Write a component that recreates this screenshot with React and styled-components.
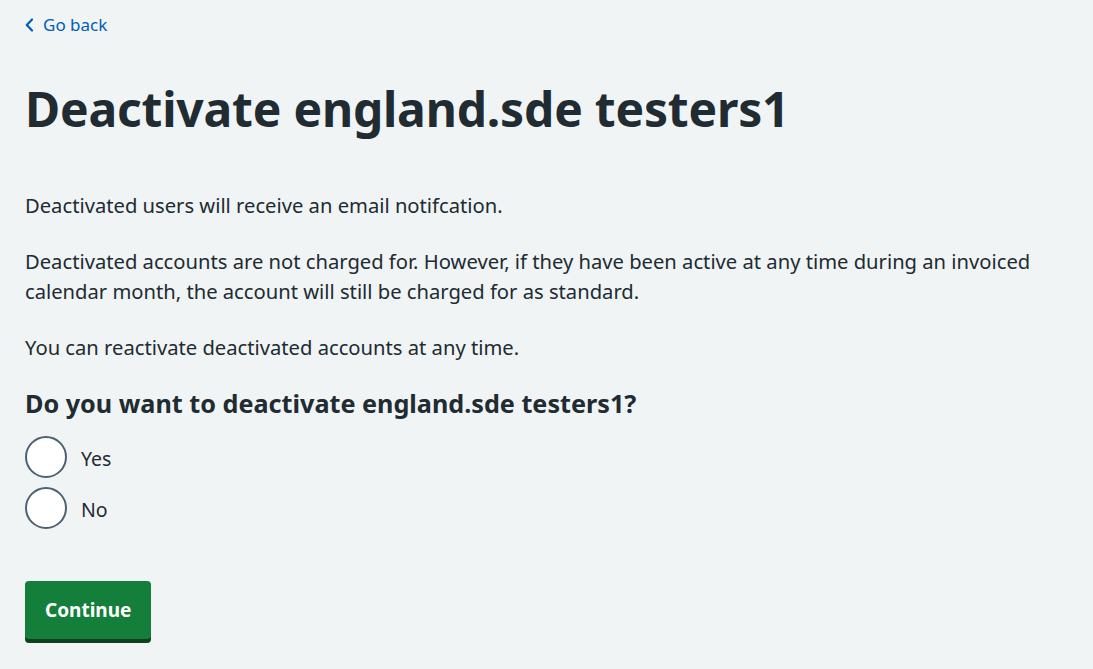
import React from 'react';
import styled, { createGlobalStyle } from 'styled-components';

const GlobalStyle = createGlobalStyle`
  html, body {
    margin: 0;
    padding: 0;
    background: #f0f4f5;
  }
  body {
    font-family: 'Noto Sans', 'Open Sans', Arial, sans-serif;
    color: #212b32;
  }
`;

const Page = styled.main`
  min-height: 669px;
  padding: 13px 25px 0;
  box-sizing: border-box;
`;

const BackLink = styled.a`
  display: flex;
  width: fit-content;
  align-items: center;
  gap: 9px;
  color: #005eb8;
  font-size: 17px;
  line-height: 24px;
  text-decoration: none;
  cursor: pointer;

  svg {
    width: 9px;
    height: 14px;
  }
`;

const Heading = styled.h1`
  margin: 44px 0 0;
  font-size: 48px;
  line-height: 56px;
  font-weight: 700;
  letter-spacing: -0.2px;
`;

const Body = styled.div`
  margin-top: 53px;
  max-width: 1043px;
`;

const Para = styled.p`
  margin: 0 0 26px;
  font-size: 20.2px;
  line-height: 30px;
`;

const Fieldset = styled.fieldset`
  border: 0;
  margin: 0;
  padding: 0;
`;

const Legend = styled.legend`
  padding: 0;
  font-size: 25.2px;
  line-height: 30px;
  font-weight: 700;
  margin-bottom: 18px;
`;

const Options = styled.div`
  display: flex;
  flex-direction: column;
  gap: 9px;
`;

const Option = styled.label`
  display: flex;
  align-items: center;
  gap: 14px;
  font-size: 19.5px;
  line-height: 28px;
  cursor: pointer;
`;

const Radio = styled.span`
  width: 38px;
  height: 38px;
  border: 2px solid #4c6272;
  border-radius: 50%;
  background: #ffffff;
  flex-shrink: 0;
`;

const OptionText = styled.span`
  padding-top: 4px;
`;

const Button = styled.button`
  display: block;
  margin-top: 52px;
  padding: 0 20px;
  height: 58px;
  border: 0;
  border-radius: 4px;
  background: #137f3b;
  box-shadow: 0 4px 0 #11401f;
  color: #ffffff;
  font-family: inherit;
  font-size: 19px;
  font-weight: 700;
  cursor: pointer;
`;

export default function App() {
  return (
    <>
      <GlobalStyle />
      <Page>
        <BackLink href="#">
          <svg viewBox="0 0 9 14" fill="none">
            <path d="M7 1.5 1.8 7 7 12.5" stroke="currentColor" strokeWidth="2.2" strokeLinecap="round" strokeLinejoin="round" />
          </svg>
          Go back
        </BackLink>
        <Heading>Deactivate england.sde testers1</Heading>
        <Body>
          <Para>Deactivated users will receive an email notifcation.</Para>
          <Para>
            Deactivated accounts are not charged for. However, if they have been active at any time during an invoiced
            calendar month, the account will still be charged for as standard.
          </Para>
          <Para>You can reactivate deactivated accounts at any time.</Para>
          <Fieldset>
            <Legend>Do you want to deactivate england.sde testers1?</Legend>
            <Options>
              <Option>
                <Radio />
                <OptionText>Yes</OptionText>
              </Option>
              <Option>
                <Radio />
                <OptionText>No</OptionText>
              </Option>
            </Options>
          </Fieldset>
          <Button>Continue</Button>
        </Body>
      </Page>
    </>
  );
}
